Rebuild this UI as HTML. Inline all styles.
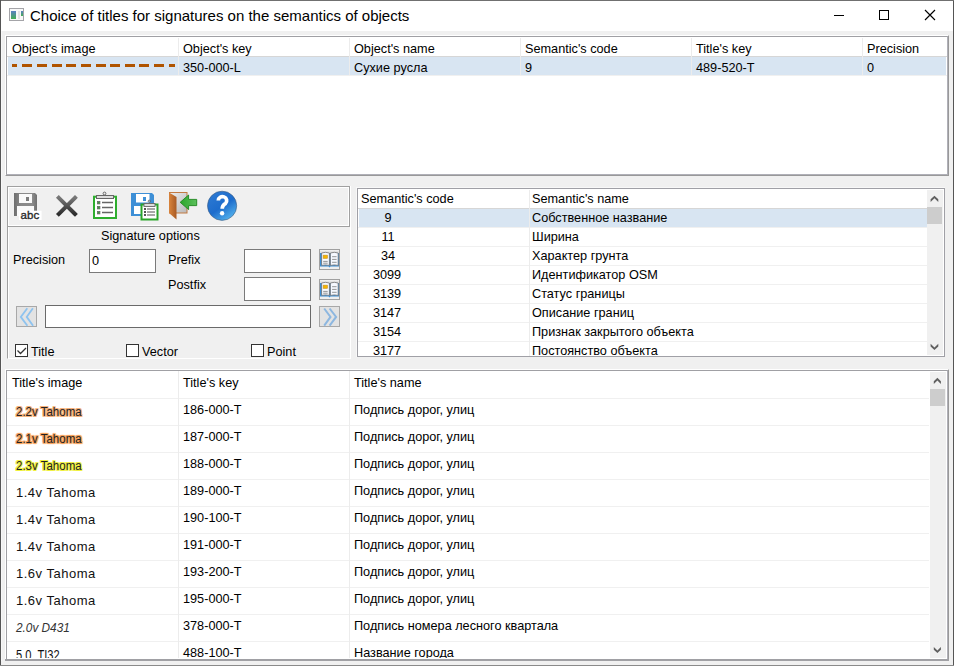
<!DOCTYPE html>
<html><head><meta charset="utf-8">
<style>
*{margin:0;padding:0;box-sizing:border-box}
html,body{width:954px;height:666px;overflow:hidden;background:#707070}
body{position:relative;font-family:"Liberation Sans",sans-serif;font-size:12.7px;color:#000}
.a{position:absolute}
.t{position:absolute;white-space:nowrap;line-height:15px}
.sep{position:absolute;width:1px;background:#ececec}
.hl{position:absolute;height:1px;background:#f0f0f0}
.sel{position:absolute;background:#d8e5f2}
.c{text-align:center;width:40px}
.tt{font-size:13px;color:#111;letter-spacing:0.51px}
.tc{font-size:12.5px;color:#222;transform-origin:0 0;transform:scaleX(0.92)}
</style></head><body>
<!-- window -->
<div class="a" style="left:1px;top:1px;width:953px;height:664px;background:#f0f0f0;border-right:1px solid #555"></div>
<div class="a" style="left:1px;top:1px;width:952px;height:30px;background:#fff"></div>
<div class="a" style="left:0;top:0;width:1px;height:666px;background:#555"></div>
<div class="a" style="left:1px;top:31px;width:1px;height:634px;background:#f8f8f8"></div>
<svg class="a" style="left:9px;top:8px" width="15" height="13" viewBox="0 0 15 13">
  <defs><linearGradient id="gi" x1="0" y1="0" x2="0" y2="1"><stop offset="0" stop-color="#5b7fc4"/><stop offset="1" stop-color="#42ae52"/></linearGradient></defs>
  <rect x="0.5" y="0.5" width="14" height="12" fill="#f8f8f8" stroke="#a4a4a8"/>
  <rect x="2" y="3" width="5" height="8" fill="url(#gi)"/>
  <rect x="9" y="3" width="2" height="8" fill="#e2e2e2"/>
  <rect x="12" y="3" width="2" height="5" fill="url(#gi)"/>
</svg>
<div class="t" style="left:30px;top:7px;font-size:15px;line-height:17px">Choice of titles for signatures on the semantics of objects</div>
<div class="a" style="left:834px;top:15px;width:10px;height:1px;background:#000"></div>
<div class="a" style="left:879px;top:10px;width:10px;height:10px;border:1px solid #000"></div>
<svg class="a" style="left:924px;top:9px" width="13" height="13" viewBox="0 0 13 13"><path d="M1 1L11 11M11 1L1 11" stroke="#000" stroke-width="1.15"/></svg>

<!-- top list -->
<div class="a" style="left:5px;top:35px;width:944px;height:141px;border-left:1px solid #fff;border-top:1px solid #fff;border-right:1px solid #999;border-bottom:1px solid #999"></div>
<div class="a" style="left:6px;top:36px;width:942px;height:139px;background:#fff;border:1px solid #a0a0a4;border-right-color:#b0b0b8;border-bottom-color:#b0b0b8"></div>
<div class="a" style="left:7px;top:56px;width:940px;height:1px;background:#d6d6d6"></div>
<div class="sel" style="left:8px;top:57px;width:938px;height:18px"></div>
<div class="hl" style="left:7px;top:75px;width:940px"></div>
<div class="sep" style="left:178px;top:38px;height:37px"></div>
<div class="sep" style="left:349px;top:38px;height:37px"></div>
<div class="sep" style="left:520px;top:38px;height:37px"></div>
<div class="sep" style="left:691px;top:38px;height:37px"></div>
<div class="sep" style="left:862px;top:38px;height:37px"></div>
<div class="t" style="left:12px;top:42px">Object's image</div>
<div class="t" style="left:183px;top:42px">Object's key</div>
<div class="t" style="left:354px;top:42px">Object's name</div>
<div class="t" style="left:525px;top:42px">Semantic's code</div>
<div class="t" style="left:696px;top:42px">Title's key</div>
<div class="t" style="left:867px;top:42px">Precision</div>
<svg class="a" style="left:0;top:0" width="180" height="80" fill="#b05400"><rect x="12" y="64" width="5" height="3"/><rect x="22" y="64" width="10" height="3"/><rect x="37" y="64" width="10" height="3"/><rect x="52" y="64" width="10" height="3"/><rect x="66" y="64" width="10" height="3"/><rect x="81" y="64" width="10" height="3"/><rect x="96" y="64" width="10" height="3"/><rect x="110" y="64" width="10" height="3"/><rect x="125" y="64" width="10" height="3"/><rect x="139" y="64" width="10" height="3"/><rect x="154" y="64" width="10" height="3"/><rect x="169" y="64" width="6" height="3"/></svg>
<div class="t" style="left:183px;top:61px">350-000-L</div>
<div class="t" style="left:354px;top:61px">Сухие русла</div>
<div class="t" style="left:525px;top:61px">9</div>
<div class="t" style="left:696px;top:61px">489-520-T</div>
<div class="t" style="left:867px;top:61px">0</div>

<!-- toolbar frame -->
<div class="a" style="left:7px;top:186px;width:343px;height:41px;border:1px solid #a0a0a0;box-shadow:inset 0 0 0 1px #fff"></div>
<div class="a" style="left:350px;top:186px;width:1px;height:173px;background:#fff"></div>
<!-- icons -->
<svg class="a" style="left:13px;top:191px" width="32" height="30" viewBox="0 0 32 30">
  <defs><linearGradient id="gs" x1="0" y1="0" x2="1" y2="0"><stop offset="0" stop-color="#6e6e6e"/><stop offset="0.3" stop-color="#8a8a8a"/><stop offset="0.8" stop-color="#8c8c8c"/><stop offset="1" stop-color="#707070"/></linearGradient></defs><path d="M1 2H22L24 4V25H1Z" fill="url(#gs)"/>
  <rect x="6" y="3" width="13" height="9" fill="#fafafa"/>
  <rect x="13" y="6" width="3" height="4" fill="#7c7c7c"/>
  <rect x="4" y="15" width="17" height="10" fill="#fafafa"/>
  <rect x="6" y="19.7" width="22.6" height="9.3" fill="#fff"/>
  <text x="7.6" y="28" style="font-family:'Liberation Sans',sans-serif;font-size:11.5px" fill="#2a2a2a" stroke="#2a2a2a" stroke-width="0.35">abc</text>
</svg>
<svg class="a" style="left:54px;top:193px" width="26" height="26" viewBox="0 0 26 26">
  <defs><linearGradient id="gx" x1="0" y1="0" x2="0" y2="1"><stop offset="0" stop-color="#777"/><stop offset="1" stop-color="#2e2e2e"/></linearGradient></defs>
  <path d="M4.8 4.8L21 21M21 4.8L4.8 21" stroke="url(#gx)" stroke-width="4" stroke-linecap="square"/>
</svg>
<svg class="a" style="left:92px;top:191px" width="26" height="29" viewBox="0 0 26 29">
  <rect x="2" y="5.7" width="22" height="21.3" fill="#fff" stroke="#2eae2e" stroke-width="2"/>
  <rect x="4.5" y="4.5" width="17" height="3" fill="#ddd" stroke="#666"/>
  <circle cx="12.5" cy="2.5" r="1.4" fill="none" stroke="#666"/>
  <g fill="#3aa03a" stroke="#666" stroke-width="0.8"><rect x="5.5" y="10.5" width="2.4" height="2.4"/><rect x="5.5" y="15.5" width="2.4" height="2.4"/><rect x="5.5" y="20.5" width="2.4" height="2.4"/></g>
  <g stroke="#666" stroke-width="1.4"><path d="M10 11.5H21M10 16.5H21M10 21.5H21"/></g>
</svg>
<svg class="a" style="left:130px;top:192px" width="30" height="30" viewBox="0 0 30 30">
  <path d="M1 1H22L24 3V24H1Z" fill="#3d8fd6"/>
  <rect x="6" y="2" width="13.5" height="8.5" fill="#fff"/>
  <rect x="13" y="5" width="3" height="4" fill="#3d8fd6"/>
  <rect x="4" y="14" width="18" height="8" fill="#fff"/>
  <rect x="11.5" y="12.5" width="16" height="15" fill="#fff" stroke="#2aa52a" stroke-width="2"/>
  <rect x="14" y="11.5" width="11" height="3" fill="#ddd" stroke="#666" stroke-width="0.9"/>
  <circle cx="19.3" cy="9.2" r="1.1" fill="none" stroke="#666" stroke-width="0.9"/>
  <g fill="#555"><rect x="14" y="16" width="2" height="2"/><rect x="14" y="19" width="2" height="2"/><rect x="14" y="22" width="2" height="2"/></g>
  <g stroke="#505050" stroke-width="1"><path d="M17 17H25M17 20H25M17 23H25"/></g>
</svg>
<svg class="a" style="left:168px;top:191px" width="30" height="30" viewBox="0 0 30 30">
  <defs><linearGradient id="gd" x1="0" y1="0" x2="1" y2="1"><stop offset="0" stop-color="#eee"/><stop offset="1" stop-color="#b8b8b8"/></linearGradient>
  <linearGradient id="go" x1="0" y1="0" x2="1" y2="0"><stop offset="0" stop-color="#d9843c"/><stop offset="1" stop-color="#a85a24"/></linearGradient>
  <linearGradient id="ga" x1="0" y1="0" x2="1" y2="0"><stop offset="0" stop-color="#2aa52a"/><stop offset="1" stop-color="#5cc05c"/></linearGradient></defs>
  <rect x="1.5" y="1.5" width="17.5" height="20.5" fill="url(#gd)" stroke="#c27a42"/>
  <path d="M1 1.5L8.5 6V28.5L1 22Z" fill="url(#go)"/>
  <path d="M12.2 11.3L20.6 4V8.4H28.7V14.6H20.6V18.6Z" fill="url(#ga)" stroke="#1d861d" stroke-width="0.9"/>
</svg>
<svg class="a" style="left:206px;top:190px" width="32" height="32" viewBox="0 0 32 32">
  <defs><linearGradient id="gh" x1="0.2" y1="0.1" x2="0.8" y2="0.95"><stop offset="0" stop-color="#2b78d2"/><stop offset="0.5" stop-color="#1d6ccc"/><stop offset="1" stop-color="#55b4ee"/></linearGradient></defs>
  <circle cx="16.1" cy="15.8" r="14.6" fill="url(#gh)" stroke="#3a5a80" stroke-width="0.6"/>
  <path d="M12.3 10.6A4.2 4.0 0 1 1 19.6 13.3C18.2 14.6 16.2 15.2 16.2 18.8" fill="none" stroke="#fff" stroke-width="3.7"/><circle cx="16.1" cy="23.3" r="2.2" fill="#fff"/>
</svg>

<!-- options frame -->
<div class="a" style="left:7px;top:227px;width:344px;height:132px;border-left:1px solid #a0a0a0;border-right:1px solid #fff;border-bottom:1px solid #fff;box-shadow:inset 1px 0 0 #fff"></div>
<div class="t" style="left:101px;top:229px">Signature options</div>
<div class="t" style="left:13px;top:253px">Precision</div>
<div class="a" style="left:89px;top:249px;width:67px;height:24px;background:#fff;border:1px solid #7a7a7a"></div>
<div class="t" style="left:92px;top:254px">0</div>
<div class="t" style="left:168px;top:253px">Prefix</div>
<div class="a" style="left:244px;top:249px;width:67px;height:24px;background:#fff;border:1px solid #7a7a7a"></div>
<div class="t" style="left:168px;top:278px">Postfix</div>
<div class="a" style="left:244px;top:277px;width:67px;height:24px;background:#fff;border:1px solid #7a7a7a"></div>
<div class="a" style="left:45px;top:305px;width:266px;height:23px;background:#fff;border:1px solid #6a6a6a"></div>
<!-- book buttons -->
<svg class="a" style="left:319px;top:249px" width="21" height="21" viewBox="0 0 21 21">
  <rect x="0.5" y="0.5" width="20" height="20" fill="#efefef" stroke="#a0a0a0"/>
  <rect x="1" y="2" width="19" height="2" fill="#e4e4e4"/>
  <path d="M1 4H20V17.6H11.5L10.5 18.6L9.5 17.6H1Z" fill="#3d8fd6"/>
  <path d="M2.6 4Q6.5 2.6 10.4 4V16.4Q6.5 15.4 2.6 16.4Z" fill="#f6f9ff" stroke="#6e6e6e" stroke-width="0.8"/>
  <path d="M11.4 4Q15.3 2.6 19.2 4V16.4Q15.3 15.4 11.4 16.4Z" fill="#f6f9ff" stroke="#6e6e6e" stroke-width="0.8"/>
  <rect x="4.1" y="6.1" width="4.5" height="3.4" fill="#f5b400" stroke="#c09030" stroke-width="0.5"/>
  <g stroke="#8a8a8a" stroke-width="0.9"><path d="M4.2 12.4H8.7M4.2 14.2H8.7M13.1 7.7H17.6M13.1 10.4H17.6M13.1 13.3H17.6"/></g>
</svg>
<svg class="a" style="left:319px;top:279px" width="21" height="21" viewBox="0 0 21 21">
  <rect x="0.5" y="0.5" width="20" height="20" fill="#efefef" stroke="#a0a0a0"/>
  <rect x="1" y="2" width="19" height="2" fill="#e4e4e4"/>
  <path d="M1 4H20V17.6H11.5L10.5 18.6L9.5 17.6H1Z" fill="#3d8fd6"/>
  <path d="M2.6 4Q6.5 2.6 10.4 4V16.4Q6.5 15.4 2.6 16.4Z" fill="#f6f9ff" stroke="#6e6e6e" stroke-width="0.8"/>
  <path d="M11.4 4Q15.3 2.6 19.2 4V16.4Q15.3 15.4 11.4 16.4Z" fill="#f6f9ff" stroke="#6e6e6e" stroke-width="0.8"/>
  <rect x="4.1" y="6.1" width="4.5" height="3.4" fill="#f5b400" stroke="#c09030" stroke-width="0.5"/>
  <g stroke="#8a8a8a" stroke-width="0.9"><path d="M4.2 12.4H8.7M4.2 14.2H8.7M13.1 7.7H17.6M13.1 10.4H17.6M13.1 13.3H17.6"/></g>
</svg>
<!-- arrow buttons -->
<svg class="a" style="left:16px;top:306px" width="21" height="21" viewBox="0 0 21 21">
  <rect x="0.5" y="0.5" width="20" height="20" fill="#e3e3e3" stroke="#a8a8a8"/>
  <path d="M11.3 2.2L4.8 10.9L11.4 19.8M16.9 2.2L10.7 10.9L17.1 19.8" fill="none" stroke="#8ec3ef" stroke-width="1.8"/>
</svg>
<svg class="a" style="left:319px;top:306px" width="21" height="21" viewBox="0 0 21 21">
  <rect x="0.5" y="0.5" width="20" height="20" fill="#e3e3e3" stroke="#a8a8a8"/>
  <path d="M5.2 2.5L11.5 10.9L5.2 19.6M10.6 2.5L17.1 10.9L10.6 19.6" fill="none" stroke="#8db7e0" stroke-width="2"/>
</svg>
<!-- checkboxes -->
<div class="a" style="left:15px;top:344px;width:13px;height:13px;background:#fff;border:1px solid #333"></div>
<svg class="a" style="left:15px;top:344px" width="13" height="13"><path d="M2.5 6.5L5.5 9.5L11 4" fill="none" stroke="#333" stroke-width="1.3"/></svg>
<div class="t" style="left:31px;top:345px">Title</div>
<div class="a" style="left:126px;top:344px;width:13px;height:13px;background:#fff;border:1px solid #333"></div>
<div class="t" style="left:142px;top:345px">Vector</div>
<div class="a" style="left:251px;top:344px;width:13px;height:13px;background:#fff;border:1px solid #333"></div>
<div class="t" style="left:267px;top:345px">Point</div>

<!-- semantics list -->
<div class="a" style="left:356px;top:187px;width:589px;height:170px;border-left:1px solid #f8f8f8;border-top:1px solid #f8f8f8"></div>
<div class="a" style="left:357px;top:188px;width:588px;height:169px;background:#fff;border:1px solid #a0a0a6"></div>
<div class="a" style="left:927px;top:190px;width:16px;height:165px;background:#f0f0f0"></div>
<div class="a" style="left:927px;top:207px;width:15px;height:17px;background:#cdcdcd"></div>
<svg class="a" style="left:927px;top:190px" width="16" height="165" fill="#606060"><path d="M3.6 11.9L7.45 8.3L11.3 11.9V9.2L7.45 5.7L3.6 9.2Z"/><path d="M3.6 153.8L7.45 157.4L11.3 153.8V156.5L7.45 160L3.6 156.5Z"/></svg>
<div class="hl" style="left:358px;top:227px;width:569px"></div>
<div class="hl" style="left:358px;top:246px;width:569px"></div>
<div class="hl" style="left:358px;top:265px;width:569px"></div>
<div class="hl" style="left:358px;top:284px;width:569px"></div>
<div class="hl" style="left:358px;top:303px;width:569px"></div>
<div class="hl" style="left:358px;top:322px;width:569px"></div>
<div class="hl" style="left:358px;top:341px;width:569px"></div>
<div class="a" style="left:358px;top:208px;width:569px;height:1px;background:#d6d6d6"></div>
<div class="sel" style="left:359px;top:209px;width:568px;height:18px"></div>
<div class="sep" style="left:529px;top:190px;height:166px"></div>
<div class="t" style="left:361px;top:192px">Semantic's code</div>
<div class="t" style="left:532px;top:192px">Semantic's name</div>
<div class="t c" style="left:368px;top:211px">9</div><div class="t" style="left:532px;top:211px">Собственное название</div>
<div class="t c" style="left:368px;top:230px">11</div><div class="t" style="left:532px;top:230px">Ширина</div>
<div class="t c" style="left:368px;top:249px">34</div><div class="t" style="left:532px;top:249px">Характер грунта</div>
<div class="t c" style="left:367px;top:268px">3099</div><div class="t" style="left:532px;top:268px">Идентификатор OSM</div>
<div class="t c" style="left:367px;top:287px">3139</div><div class="t" style="left:532px;top:287px">Статус границы</div>
<div class="t c" style="left:367px;top:306px">3147</div><div class="t" style="left:532px;top:306px">Описание границ</div>
<div class="t c" style="left:367px;top:325px">3154</div><div class="t" style="left:532px;top:325px">Признак закрытого объекта</div>
<div class="a" style="left:358px;top:340px;width:569px;height:16px;overflow:hidden">
  <div class="t c" style="left:9px;top:4px">3177</div><div class="t" style="left:174px;top:4px">Постоянство объекта</div>
</div>

<!-- bottom list -->
<div class="a" style="left:5px;top:369px;width:944px;height:292px;border-left:1px solid #fff;border-top:1px solid #fff;border-right:1px solid #999;border-bottom:1px solid #999"></div>
<div class="a" style="left:6px;top:370px;width:942px;height:290px;background:#fff;border:1px solid #a0a0a4;border-right-color:#b0b0b8;border-bottom-color:#b0b0b8"></div>
<div class="hl" style="left:7px;top:398px;width:922px"></div>
<div class="hl" style="left:7px;top:425px;width:922px"></div>
<div class="hl" style="left:7px;top:452px;width:922px"></div>
<div class="hl" style="left:7px;top:479px;width:922px"></div>
<div class="hl" style="left:7px;top:506px;width:922px"></div>
<div class="hl" style="left:7px;top:533px;width:922px"></div>
<div class="hl" style="left:7px;top:560px;width:922px"></div>
<div class="hl" style="left:7px;top:587px;width:922px"></div>
<div class="hl" style="left:7px;top:614px;width:922px"></div>
<div class="hl" style="left:7px;top:641px;width:922px"></div>
<div class="sep" style="left:178px;top:371px;height:287px"></div>
<div class="sep" style="left:349px;top:371px;height:287px"></div>
<div class="a" style="left:930px;top:372px;width:16px;height:286px;background:#f0f0f0"></div>
<div class="a" style="left:930px;top:389px;width:15px;height:17px;background:#cdcdcd"></div>
<svg class="a" style="left:930px;top:372px" width="16" height="286" fill="#606060"><path d="M3.8 11.9L7.4 8.4L10.9 11.9V9.2L7.4 5.8L3.8 9.2Z"/><path d="M3.8 275L7.4 278.5L10.9 275V277.7L7.4 281.1L3.8 277.7Z"/></svg>
<div class="t" style="left:12px;top:376px">Title's image</div>
<div class="t" style="left:183px;top:376px">Title's key</div>
<div class="t" style="left:354px;top:376px">Title's name</div>

<div class="t tc" style="left:16px;top:405px;text-shadow:-1px 0px 0.6px #f6b07a,1px 0px 0.6px #f6b07a,0px -1px 0.6px #f6b07a,0px 1px 0.6px #f6b07a,-1px -1px 0.6px #f6b07a,1px 1px 0.6px #f6b07a,-1px 1px 0.6px #f6b07a,1px -1px 0.6px #f6b07a">2.2v Tahoma</div>
<div class="t tc" style="left:16px;top:432px;text-shadow:-1px 0px 0.8px #f5a05a,1px 0px 0.8px #f5a05a,0px -1px 0.8px #f5a05a,0px 1px 0.8px #f5a05a,-1px -1px 0.8px #f5a05a,1px 1px 0.8px #f5a05a,-1px 1px 0.8px #f5a05a,1px -1px 0.8px #f5a05a">2.1v Tahoma</div>
<div class="t tc" style="left:16px;top:459px;text-shadow:-1px 0px 0.6px #f0f040,1px 0px 0.6px #f0f040,0px -1px 0.6px #f0f040,0px 1px 0.6px #f0f040,-1px -1px 0.6px #f0f040,1px 1px 0.6px #f0f040,-1px 1px 0.6px #f0f040,1px -1px 0.6px #f0f040">2.3v Tahoma</div>
<div class="t tt" style="left:16px;top:485px">1.4v Tahoma</div>
<div class="t tt" style="left:16px;top:512px">1.4v Tahoma</div>
<div class="t tt" style="left:16px;top:539px">1.4v Tahoma</div>
<div class="t tt" style="left:16px;top:566px">1.6v Tahoma</div>
<div class="t tt" style="left:16px;top:593px">1.6v Tahoma</div>
<div class="t" style="left:16px;top:621px;font-style:italic;color:#333;transform-origin:0 0;transform:scaleX(0.93)">2.0v D431</div>
<div class="t" style="left:16px;top:647px;font-size:15px;color:#111;transform-origin:0 0;transform:scaleX(0.74)">5.0&nbsp; TI32</div>

<div class="t" style="left:183px;top:403px">186-000-T</div><div class="t" style="left:354px;top:403px">Подпись дорог, улиц</div>
<div class="t" style="left:183px;top:430px">187-000-T</div><div class="t" style="left:354px;top:430px">Подпись дорог, улиц</div>
<div class="t" style="left:183px;top:457px">188-000-T</div><div class="t" style="left:354px;top:457px">Подпись дорог, улиц</div>
<div class="t" style="left:183px;top:484px">189-000-T</div><div class="t" style="left:354px;top:484px">Подпись дорог, улиц</div>
<div class="t" style="left:183px;top:511px">190-100-T</div><div class="t" style="left:354px;top:511px">Подпись дорог, улиц</div>
<div class="t" style="left:183px;top:538px">191-000-T</div><div class="t" style="left:354px;top:538px">Подпись дорог, улиц</div>
<div class="t" style="left:183px;top:565px">193-200-T</div><div class="t" style="left:354px;top:565px">Подпись дорог, улиц</div>
<div class="t" style="left:183px;top:592px">195-000-T</div><div class="t" style="left:354px;top:592px">Подпись дорог, улиц</div>
<div class="t" style="left:183px;top:619px">378-000-T</div><div class="t" style="left:354px;top:619px">Подпись номера лесного квартала</div>
<div class="t" style="left:183px;top:646px">488-100-T</div><div class="t" style="left:354px;top:646px">Название города</div>
<!-- cover for clipped bottom -->
<div class="a" style="left:7px;top:658px;width:940px;height:1px;background:#fff"></div>
<div class="a" style="left:5px;top:659px;width:944px;height:2px;background:#a0a0a4"></div>
<div class="a" style="left:1px;top:661px;width:952px;height:4px;background:#f0f0f0"></div>
<div class="a" style="left:0;top:665px;width:954px;height:1px;background:#8a8a8a"></div>
</body></html>
